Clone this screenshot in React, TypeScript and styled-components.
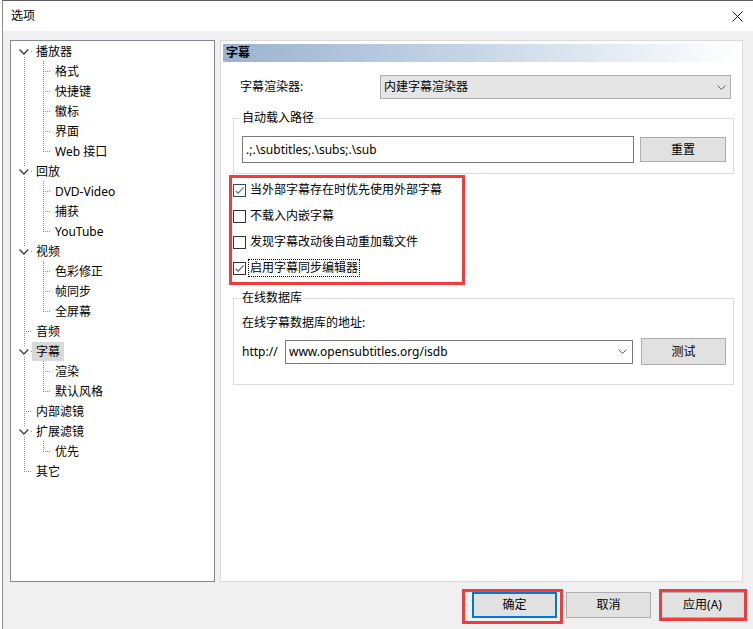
import React from "react";
import styled, { createGlobalStyle } from "styled-components";

const GlobalStyle = createGlobalStyle`
  html, body { margin: 0; padding: 0; background: #ffffff; }
  body {
    font-family: "Noto Sans", "Noto Sans CJK SC", sans-serif;
    font-size: 12px;
    color: #000;
  }
  #root { width: 753px; height: 629px; }
  * { box-sizing: border-box; }
`;

const Frame = styled.div`
  width: 753px;
  height: 629px;
  padding-left: 2px;
  background: #ffffff;
  display: flex;
  overflow: hidden;
`;

const Dialog = styled.div`
  flex: 1;
  display: flex;
  flex-direction: column;
  border-left: 1px solid #8c8c8c;
  border-top: 1px solid #5e5e5e;
  background: #f0f0f0;
`;

const TitleBar = styled.div`
  height: 30px;
  flex: none;
  background: #ffffff;
  display: flex;
  align-items: center;
  justify-content: space-between;
  padding: 0 10px 0 8px;
`;

const Title = styled.span`
  line-height: 16px;
`;

const Body = styled.div`
  flex: 1;
  display: flex;
  flex-direction: column;
  padding: 9px 8px 0 7px;
`;

const MainRow = styled.div`
  display: flex;
  gap: 5px;
  height: 542px;
  margin-right: 2px;
`;

/* ---------- navigation tree ---------- */

const TreePanel = styled.div`
  width: 205px;
  flex: none;
  border: 1px solid #828790;
  background: #ffffff;
  display: flex;
  flex-direction: column;
`;

const TreeRow = styled.div`
  height: 20px;
  display: flex;
  align-items: center;
`;

const TreeLabel = styled.span<{ $selected?: boolean }>`
  height: 19px;
  line-height: 19px;
  padding: 0 4px;
  white-space: nowrap;
  background: ${(p) => (p.$selected ? "#d9d9d9" : "transparent")};
`;

const DOT = "#8e8e8e";

function VLine({ x, y1, y2 }: { x: number; y1: number; y2: number }) {
  return <line x1={x} y1={y1} x2={x} y2={y2} stroke={DOT} strokeDasharray="1 1" />;
}
function HLine({ y, x1, x2 }: { y: number; x1: number; x2: number }) {
  return <line x1={x1} y1={y} x2={x2} y2={y} stroke={DOT} strokeDasharray="1 1" />;
}

function RootGuide({ first, last, expandable }: { first: boolean; last: boolean; expandable: boolean }) {
  return (
    <svg width="21" height="20" style={{ flex: "none", display: "block" }}>
      {expandable ? (
        <>
          {!first && <VLine x={13.5} y1={0} y2={6} />}
          {!last && <VLine x={13.5} y1={16} y2={20} />}
          <path d="M8.5 8.5 L12.9 12.9 L17.3 8.5" fill="none" stroke="#404040" strokeWidth="1.4" />
          <rect x="20" y="10" width="1" height="1" fill={DOT} />
        </>
      ) : (
        <>
          <VLine x={13.5} y1={0} y2={last ? 11 : 20} />
          <HLine y={10.5} x1={15} x2={21} />
        </>
      )}
    </svg>
  );
}

function ChildGuide({ lastChild }: { lastChild: boolean }) {
  return (
    <svg width="40" height="20" style={{ flex: "none", display: "block" }}>
      <VLine x={13.5} y1={0} y2={20} />
      <VLine x={32.5} y1={0} y2={lastChild ? 11 : 20} />
      <HLine y={10.5} x1={34} x2={40} />
    </svg>
  );
}

type Node = { label: string; selected?: boolean; children?: string[] };

const tree: Node[] = [
  { label: "播放器", children: ["格式", "快捷键", "徽标", "界面", "Web 接口"] },
  { label: "回放", children: ["DVD-Video", "捕获", "YouTube"] },
  { label: "视频", children: ["色彩修正", "帧同步", "全屏幕"] },
  { label: "音频" },
  { label: "字幕", selected: true, children: ["渲染", "默认风格"] },
  { label: "内部滤镜" },
  { label: "扩展滤镜", children: ["优先"] },
  { label: "其它" },
];

function NavTree() {
  return (
    <TreePanel>
      {tree.map((node, i) => (
        <React.Fragment key={node.label}>
          <TreeRow>
            <RootGuide first={i === 0} last={i === tree.length - 1} expandable={!!node.children} />
            <TreeLabel $selected={node.selected}>{node.label}</TreeLabel>
          </TreeRow>
          {node.children?.map((c, j) => (
            <TreeRow key={c}>
              <ChildGuide lastChild={j === node.children!.length - 1} />
              <TreeLabel>{c}</TreeLabel>
            </TreeRow>
          ))}
        </React.Fragment>
      ))}
    </TreePanel>
  );
}

/* ---------- settings page ---------- */

const PagePanel = styled.div`
  width: 523px;
  flex: none;
  border: 1px solid #d9d9d9;
  background: #ffffff;
  padding: 2px 2px;
  display: flex;
  flex-direction: column;
`;

const PageHeader = styled.div`
  margin-top: 1px;
  height: 18px;
  line-height: 18px;
  padding-left: 3px;
  font-weight: bold;
  background: linear-gradient(to right, #9bb3cf 0%, #c3d3e4 45%, #ffffff 100%);
`;

const Content = styled.div`
  padding: 0 6px 0 10px;
  display: flex;
  flex-direction: column;
`;

const RendererRow = styled.div`
  margin-top: 13px;
  height: 24px;
  display: flex;
  align-items: center;
  padding: 0 3px 0 7px;
`;

const FieldLabel = styled.span<{ $width?: number }>`
  flex: none;
  width: ${(p) => (p.$width ? `${p.$width}px` : "auto")};
  line-height: 16px;
  white-space: nowrap;
`;

const DropList = styled.div`
  flex: 1;
  height: 24px;
  border: 1px solid #adadad;
  background: #e5e5e5;
  display: flex;
  align-items: center;
  justify-content: space-between;
  padding: 0 4px 0 3px;
  line-height: 16px;
`;

const ComboEdit = styled.div`
  flex: 1;
  height: 24px;
  border: 1px solid #7a7a7a;
  background: #ffffff;
  display: flex;
  align-items: center;
  justify-content: space-between;
  padding: 0 5px 0 3px;
  line-height: 16px;
`;

function Chevron() {
  return (
    <svg width="9" height="5" style={{ display: "block", flex: "none" }}>
      <path d="M0.5 0.5 L4.5 4.5 L8.5 0.5" fill="none" stroke="#606060" strokeWidth="1" />
    </svg>
  );
}

const Group = styled.fieldset<{ $top: number; $padTop: number; $padBottom: number }>`
  margin: ${(p) => p.$top}px 0 0 0;
  min-width: 0;
  border: 1px solid #dcdcdc;
  padding: ${(p) => p.$padTop}px 7px ${(p) => p.$padBottom}px 8px;
`;

const Legend = styled.legend`
  padding: 0 1px;
  margin-left: -1px;
  line-height: 16px;
`;

const FieldRow = styled.div<{ $gap: number; $top?: number }>`
  display: flex;
  align-items: center;
  height: 27px;
  gap: ${(p) => p.$gap}px;
  margin-top: ${(p) => p.$top ?? 0}px;
`;

const PathInput = styled.input`
  flex: 1;
  min-width: 0;
  height: 27px;
  border: 1px solid #7a7a7a;
  background: #ffffff;
  padding: 0 3px;
  font: inherit;
  color: #000;
  outline: none;
`;

const PushButton = styled.button<{ $width?: number; $height?: number; $default?: boolean }>`
  flex: none;
  width: ${(p) => p.$width ?? 85}px;
  height: ${(p) => p.$height ?? 26}px;
  border: ${(p) => (p.$default ? "2px solid #0078d7" : "1px solid #adadad")};
  background: #e1e1e1;
  font: inherit;
  color: #000;
  padding: 0;
  line-height: 16px;
`;

const CheckList = styled.div`
  position: relative;
  margin-top: 3px;
  display: flex;
  flex-direction: column;
`;

const CheckRow = styled.label`
  height: 26px;
  display: flex;
  align-items: center;
`;

const CheckText = styled.span<{ $focused?: boolean }>`
  margin-left: 2px;
  height: 18px;
  line-height: 16px;
  padding: 0 1px;
  border: 1px ${(p) => (p.$focused ? "dotted #000" : "solid transparent")};
  white-space: nowrap;
`;

const Highlight = styled.span<{ $left: number; $top: number; $width: number; $height: number }>`
  position: absolute;
  left: ${(p) => p.$left}px;
  top: ${(p) => p.$top}px;
  width: ${(p) => p.$width}px;
  height: ${(p) => p.$height}px;
  border: 3px solid #f03c3c;
  pointer-events: none;
`;

function CheckBox({ checked, tone }: { checked: boolean; tone: "blue" | "gray" }) {
  const frame = checked && tone === "blue" ? "#2c4d72" : "#333333";
  const mark = tone === "blue" ? "#4f6f92" : "#555555";
  return (
    <svg width="13" height="13" style={{ display: "block", flex: "none" }}>
      <rect x="0.5" y="0.5" width="12" height="12" fill="#ffffff" stroke={frame} />
      {checked && <path d="M2.6 6.6 L5.1 9.1 L10.6 3.4" fill="none" stroke={mark} strokeWidth="1.1" />}
    </svg>
  );
}

const options = [
  { text: "当外部字幕存在时优先使用外部字幕", checked: true, tone: "blue" as const },
  { text: "不载入内嵌字幕", checked: false, tone: "gray" as const },
  { text: "发现字幕改动後自动重加载文件", checked: false, tone: "gray" as const },
  { text: "启用字幕同步编辑器", checked: true, tone: "gray" as const, focused: true },
];

function SubtitlePage() {
  return (
    <PagePanel>
      <PageHeader>字幕</PageHeader>
      <Content>
        <RendererRow>
          <FieldLabel $width={140}>字幕渲染器:</FieldLabel>
          <DropList>
            <span>内建字幕渲染器</span>
            <Chevron />
          </DropList>
        </RendererRow>

        <Group $top={11} $padTop={10} $padBottom={10}>
          <Legend>自动载入路径</Legend>
          <FieldRow $gap={6}>
            <PathInput readOnly value=".;.\subtitles;.\subs;.\sub" />
            <PushButton $width={86} $height={25}>重置</PushButton>
          </FieldRow>
        </Group>

        <CheckList>
          {options.map((o) => (
            <CheckRow key={o.text}>
              <CheckBox checked={o.checked} tone={o.tone} />
              <CheckText $focused={o.focused}>{o.text}</CheckText>
            </CheckRow>
          ))}
          <Highlight $left={-4} $top={-2} $width={236} $height={110} />
        </CheckList>

        <Group $top={9} $padTop={8} $padBottom={19}>
          <Legend>在线数据库</Legend>
          <FieldLabel>在线字幕数据库的地址:</FieldLabel>
          <FieldRow $gap={0} $top={7}>
            <FieldLabel $width={43}>http://</FieldLabel>
            <ComboEdit>
              <span>www.opensubtitles.org/isdb</span>
              <Chevron />
            </ComboEdit>
            <PushButton $width={85} $height={27} style={{ marginLeft: 8 }}>测试</PushButton>
          </FieldRow>
        </Group>
      </Content>
    </PagePanel>
  );
}

/* ---------- dialog buttons ---------- */

const Footer = styled.div`
  margin-top: 10px;
  display: flex;
  justify-content: flex-end;
  gap: 9px;
`;

const Marked = styled.span`
  position: relative;
  display: flex;
`;

function CloseGlyph() {
  return (
    <svg width="11" height="11" style={{ display: "block" }}>
      <path d="M0.5 0.5 L10.5 10.5 M10.5 0.5 L0.5 10.5" stroke="#1a1a1a" strokeWidth="1" />
    </svg>
  );
}

export default function App() {
  return (
    <>
      <GlobalStyle />
      <Frame>
        <Dialog>
          <TitleBar>
            <Title>选项</Title>
            <CloseGlyph />
          </TitleBar>
          <Body>
            <MainRow>
              <NavTree />
              <SubtitlePage />
            </MainRow>
            <Footer>
              <Marked>
                <PushButton $default>确定</PushButton>
                <Highlight $left={-10} $top={-3} $width={101} $height={35} />
              </Marked>
              <PushButton>取消</PushButton>
              <Marked>
                <PushButton>应用(A)</PushButton>
                <Highlight $left={-1} $top={-3} $width={88} $height={32} />
              </Marked>
            </Footer>
          </Body>
        </Dialog>
      </Frame>
    </>
  );
}
